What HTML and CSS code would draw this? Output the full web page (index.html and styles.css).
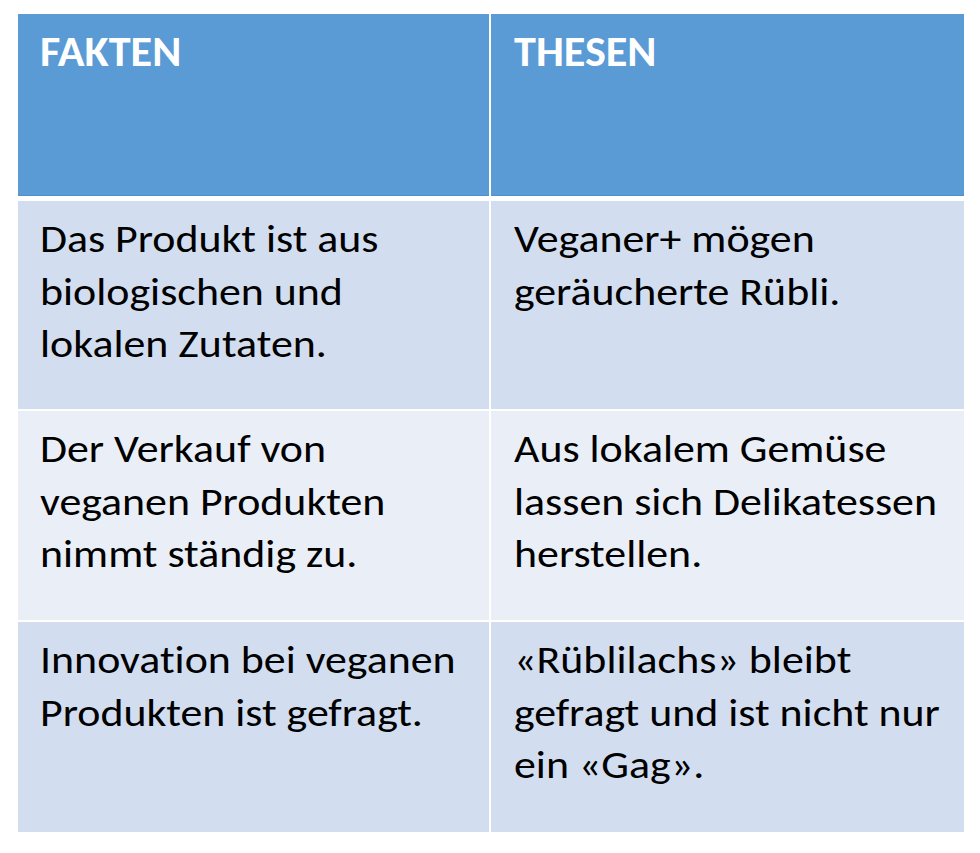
FILE: index.html
```html
<!DOCTYPE html>
<html lang="de">
<head>
<meta charset="utf-8">
<title>Fakten und Thesen</title>
<link rel="stylesheet" href="styles.css">
</head>
<body>
<div class="table">
  <div class="cell head"><div class="txt">FAKTEN</div></div>
  <div class="cell head"><div class="txt">THESEN</div></div>

  <div class="cell odd"><div class="txt"><span>Das Produkt ist aus</span><span>biologischen und</span><span>lokalen Zutaten.</span></div></div>
  <div class="cell odd"><div class="txt"><span>Veganer+ mögen</span><span>geräucherte Rübli.</span></div></div>

  <div class="cell even"><div class="txt"><span>Der Verkauf von</span><span>veganen Produkten</span><span>nimmt ständig zu.</span></div></div>
  <div class="cell even"><div class="txt"><span>Aus lokalem Gemüse</span><span>lassen sich Delikatessen</span><span>herstellen.</span></div></div>

  <div class="cell odd"><div class="txt"><span>Innovation bei veganen</span><span>Produkten ist gefragt.</span></div></div>
  <div class="cell odd"><div class="txt"><span>«Rüblilachs» bleibt</span><span>gefragt und ist nicht nur</span><span>ein «Gag».</span></div></div>
</div>
</body>
</html>
```
FILE: styles.css
```css
html, body {
  margin: 0;
  padding: 0;
  background: #ffffff;
}

body {
  padding: 14px 0 0 18px;
  font-family: "Carlito", "Liberation Sans", sans-serif;
  font-variant-ligatures: none;
  color: #000000;
}

.table {
  display: grid;
  grid-template-columns: 471px 473px;
  grid-template-rows: 185px 208px 209px 210px;
  column-gap: 2px;
  row-gap: 2px;
  width: 946px;
}

.cell {
  box-sizing: border-box;
  padding: 12px 22px 0 22px;
  overflow: hidden;
}

.cell:nth-child(2n) {
  padding-left: 23px;
}

.head {
  background: #5b9bd5;
  border-bottom: 3px solid #ffffff;
  box-shadow: inset 0 -1px 0 #528fca;
  padding-top: 13px;
}

.head .txt {
  font-size: 42.5px;
  font-weight: bold;
  line-height: 50px;
  color: #ffffff;
  transform: scaleX(1.04);
  transform-origin: left top;
}

.odd {
  background: #d2deef;
}

.even {
  background: #eaeff7;
}

.odd .txt,
.even .txt {
  font-size: 39px;
  line-height: 52.5px;
  transform: scaleX(1.125);
  transform-origin: left top;
}

.txt span {
  display: block;
  white-space: nowrap;
}
```
